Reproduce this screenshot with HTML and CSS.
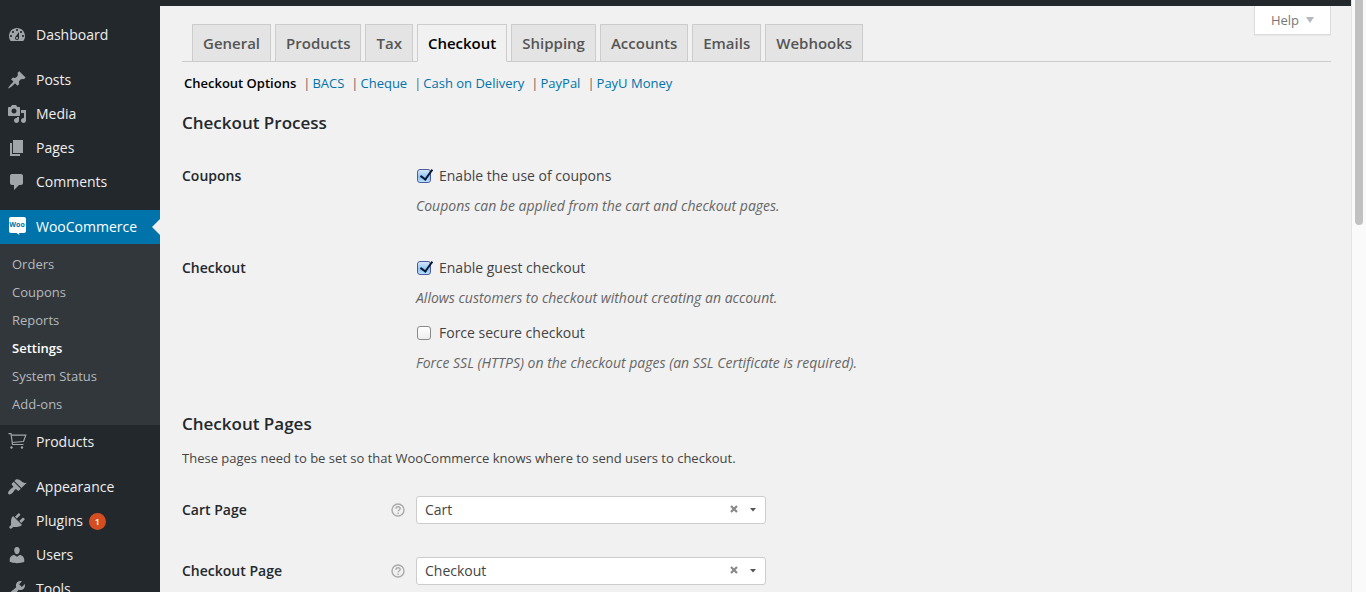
FILE: index.html
```html
<!DOCTYPE html>
<html lang="en">
<head>
<meta charset="utf-8">
<title>WooCommerce Settings</title>
<link rel="stylesheet" href="styles.css">
</head>
<body>
<div class="app">
  <nav class="sidebar" aria-label="Main menu">
    <ul class="menu">
      <li><a class="menu-link" href="#"><svg class="icon" viewBox="0 0 20 20"><path fill-rule="evenodd" d="M3.76 16h12.48c1.1-1.37 1.76-3.11 1.76-5 0-4.42-3.58-8-8-8s-8 3.58-8 8c0 1.89.66 3.63 1.76 5zM10 4c.55 0 1 .45 1 1s-.45 1-1 1-1-.45-1-1 .45-1 1-1zM6 6c.55 0 1 .45 1 1s-.45 1-1 1-1-.45-1-1 .45-1 1-1zm8 0c.55 0 1 .45 1 1s-.45 1-1 1-1-.45-1-1 .45-1 1-1zm-5.37 5.55L12 7v6c0 1.1-.9 2-2 2s-2-.9-2-2c0-.57.24-1.08.63-1.45zM4 10c.55 0 1 .45 1 1s-.45 1-1 1-1-.45-1-1 .45-1 1-1zm12 0c.55 0 1 .45 1 1s-.45 1-1 1-1-.45-1-1 .45-1 1-1zm-5 3c0-.55-.45-1-1-1s-1 .45-1 1 .45 1 1 1 1-.45 1-1z"/></svg>Dashboard</a></li>
      <li class="group-start"><a class="menu-link" href="#"><svg class="icon" viewBox="0 0 20 20"><path d="M10.44 3.02l1.82-1.82 6.36 6.35-1.83 1.82c-1.05-.68-2.48-.57-3.41.36l-.75.75c-.92.93-1.04 2.35-.35 3.41l-1.83 1.82-2.41-2.41-2.8 2.79c-.42.42-3.38 2.71-3.8 2.29s1.86-3.39 2.28-3.81l2.79-2.79L4.1 9.36l1.83-1.82c1.05.69 2.48.57 3.4-.36l.75-.75c.93-.92 1.05-2.35.36-3.41z"/></svg>Posts</a></li>
      <li><a class="menu-link" href="#"><svg class="icon" viewBox="0 0 20 20"><path fill-rule="evenodd" d="M13 11V4c0-.55-.45-1-1-1h-1.67L9 1H5L3.67 3H2c-.55 0-1 .45-1 1v7c0 .55.45 1 1 1h10c.55 0 1-.45 1-1zM7 4.5c1.38 0 2.5 1.12 2.5 2.5S8.38 9.5 7 9.5 4.5 8.38 4.5 7 5.62 4.5 7 4.5zM14 6h5v10.5c0 1.38-1.12 2.5-2.5 2.5S14 17.88 14 16.5s1.12-2.5 2.5-2.5c.17 0 .34.02.5.05V9h-3V6zm-4 8.05V13h2v3.5c0 1.38-1.12 2.5-2.5 2.5S7 17.88 7 16.5 8.12 14 9.5 14c.17 0 .34.02.5.05z"/></svg>Media</a></li>
      <li><a class="menu-link" href="#"><svg class="icon" viewBox="0 0 20 20"><path d="M6 15V2h10v13H6zm-1 1h8v2H3V5h2v11z"/></svg>Pages</a></li>
      <li><a class="menu-link" href="#"><svg class="icon" viewBox="0 0 20 20"><path d="M5 2h9c1.1 0 2 .9 2 2v7c0 1.1-.9 2-2 2h-2l-5 5v-5H5c-1.1 0-2-.9-2-2V4c0-1.1.9-2 2-2z"/></svg>Comments</a></li>
      <li class="group-start">
        <a class="menu-link current" href="#"><svg class="icon" viewBox="0 0 20 20"><path d="M4 0h13a2 2 0 0 1 2 2v12a2 2 0 0 1-2 2h-5l.5 2-3-2H4a2 2 0 0 1-2-2V2a2 2 0 0 1 2-2z"/><text class="woo-text" x="10" y="10" text-anchor="middle">Woo</text></svg>WooCommerce</a>
        <ul class="submenu">
          <li><a href="#">Orders</a></li>
          <li><a href="#">Coupons</a></li>
          <li><a href="#">Reports</a></li>
          <li><a class="active" href="#" aria-current="page">Settings</a></li>
          <li><a href="#">System Status</a></li>
          <li><a href="#">Add-ons</a></li>
        </ul>
      </li>
      <li><a class="menu-link" href="#"><svg class="icon" viewBox="0 0 20 20"><path class="line" d="M1.500 1.700h2.500l1.500 10.800h11M4.200 3.200h14.600l-2.300 6.300-11.300 1"/><circle cx="4.500" cy="15.500" r="1.200"/><circle cx="15" cy="15.500" r="1.200"/></svg>Products</a></li>
      <li class="group-start"><a class="menu-link" href="#"><svg class="icon" viewBox="0 0 20 20"><path d="M14.480 11.060L7.410 3.990l1.500-1.500c.5-.56 2.300-.47 3.510.32 1.210.8 1.430 1.280 2.910 2.100 1.180.64 2.450 1.260 4.450.85zm-.71.71L6.700 4.700 4.930 6.470c-.39.39-.39 1.020 0 1.410l1.060 1.060c.39.39.39 1.030 0 1.420-.6.6-1.430 1.110-2.210 1.690-.35.26-.7.53-1.010.84C1.430 14.230.4 16.080 1.400 17.070c.99 1 2.840-.03 4.180-1.360.31-.31.58-.66.85-1.020.57-.78 1.080-1.610 1.690-2.210.39-.39 1.020-.39 1.410 0l1.060 1.060c.39.39 1.020.39 1.410 0z"/></svg>Appearance</a></li>
      <li><a class="menu-link" href="#"><svg class="icon" viewBox="0 0 20 20"><path d="M13.110 4.360L9.870 7.600 8 5.730l3.240-3.240c.35-.34 1.050-.2 1.560.32.52.51.66 1.210.31 1.550zm-8 1.770l.91-1.120 9.010 9.010-1.190.84c-.71.71-2.630 1.160-3.820 1.160H6.140L4.900 17.260c-.59.59-1.540.59-2.120 0-.59-.58-.59-1.530 0-2.120l1.240-1.240v-3.880c0-1.130.4-3.190 1.090-3.890zm7.260 3.970l3.240-3.240c.34-.35 1.040-.21 1.550.31.52.51.66 1.210.31 1.550l-3.240 3.250z"/></svg>Plugins<span class="badge">1</span></a></li>
      <li><a class="menu-link" href="#"><svg class="icon" viewBox="0 0 20 20"><path d="M10 9.250c-2.270 0-2.730-3.440-2.730-3.440C7 4.020 7.820 2 9.970 2c2.160 0 2.980 2.020 2.710 3.810 0 0-.41 3.440-2.680 3.440zm0 2.570L12.720 10c2.390 0 4.520 2.330 4.520 4.530v2.490s-3.650 1.130-7.240 1.130c-3.650 0-7.240-1.130-7.240-1.130v-2.490c0-2.250 1.940-4.480 4.470-4.480z"/></svg>Users</a></li>
      <li><a class="menu-link" href="#"><svg class="icon" viewBox="0 0 20 20"><path fill-rule="evenodd" d="M16.680 9.770c-1.340 1.340-3.300 1.670-4.950.99l-5.410 6.520c-.99.99-2.590.99-3.580 0s-.99-2.590 0-3.570l6.520-5.420c-.68-1.650-.35-3.610.99-4.950 1.280-1.280 3.120-1.620 4.720-1.060l-2.890 2.890 2.820 2.820 2.860-2.870c.53 1.580.18 3.390-1.080 4.650zM3.810 16.210c.4.39 1.040.39 1.430 0 .4-.4.4-1.040 0-1.430-.39-.4-1.030-.4-1.430 0-.39.39-.39 1.030 0 1.430z"/></svg>Tools</a></li>
    </ul>
  </nav>

  <div class="page">
    <div class="topbar"></div>
    <button class="help" type="button">Help<svg class="help-arrow" viewBox="0 0 8 6"><path d="M0 0h8L4 6z"/></svg></button>
    <main class="content">
      <nav class="tabs" aria-label="Settings tabs">
        <a class="tab" href="#">General</a>
        <a class="tab" href="#">Products</a>
        <a class="tab" href="#">Tax</a>
        <a class="tab tab-active" href="#" aria-current="page">Checkout</a>
        <a class="tab" href="#">Shipping</a>
        <a class="tab" href="#">Accounts</a>
        <a class="tab" href="#">Emails</a>
        <a class="tab" href="#">Webhooks</a>
      </nav>
      <ul class="sections">
        <li><a class="section-active" href="#">Checkout Options</a></li>
        <li><a href="#">BACS</a></li>
        <li><a href="#">Cheque</a></li>
        <li><a href="#">Cash on Delivery</a></li>
        <li><a href="#">PayPal</a></li>
        <li><a href="#">PayU Money</a></li>
      </ul>

      <h2 class="heading">Checkout Process</h2>
      <div class="options">
        <div class="row">
          <div class="row-title">Coupons</div>
          <div class="fields">
            <div>
              <label class="check"><input type="checkbox" checked>Enable the use of coupons</label>
              <p class="description">Coupons can be applied from the cart and checkout pages.</p>
            </div>
          </div>
        </div>
        <div class="row">
          <div class="row-title">Checkout</div>
          <div class="fields">
            <div>
              <label class="check"><input type="checkbox" checked>Enable guest checkout</label>
              <p class="description">Allows customers to checkout without creating an account.</p>
            </div>
            <div>
              <label class="check"><input type="checkbox">Force secure checkout</label>
              <p class="description">Force SSL (HTTPS) on the checkout pages (an SSL Certificate is required).</p>
            </div>
          </div>
        </div>
      </div>

      <h2 class="heading heading-pages">Checkout Pages</h2>
      <p class="intro">These pages need to be set so that WooCommerce knows where to send users to checkout.</p>
      <div class="options">
        <div class="row row-select">
          <label class="row-title" for="cart-page">Cart Page</label>
          <svg class="tip" viewBox="0 0 14 14"><circle cx="7" cy="7" r="6"/><path d="M5 5.700C5 3.200 9.200 3.200 9.200 5.600c0 1.400-2.100 1.400-2.100 2.700M7.100 9.500v1.500"/></svg>
          <div class="picker">
            <select id="cart-page"><option>Cart</option></select>
            <button class="clear" type="button" aria-label="Clear cart page"><svg viewBox="0 0 8 8"><path d="M1 1l6 6M7 1L1 7"/></svg></button>
            <svg class="caret" viewBox="0 0 6 4"><path d="M0 0h6L3 3.500z"/></svg>
          </div>
        </div>
        <div class="row row-select">
          <label class="row-title" for="checkout-page">Checkout Page</label>
          <svg class="tip" viewBox="0 0 14 14"><circle cx="7" cy="7" r="6"/><path d="M5 5.700C5 3.200 9.200 3.200 9.200 5.600c0 1.400-2.100 1.400-2.100 2.700M7.100 9.500v1.500"/></svg>
          <div class="picker">
            <select id="checkout-page"><option>Checkout</option></select>
            <button class="clear" type="button" aria-label="Clear checkout page"><svg viewBox="0 0 8 8"><path d="M1 1l6 6M7 1L1 7"/></svg></button>
            <svg class="caret" viewBox="0 0 6 4"><path d="M0 0h6L3 3.500z"/></svg>
          </div>
        </div>
      </div>
    </main>
  </div>

  <div class="scroll-track"><div class="scroll-thumb"></div></div>
</div>
</body>
</html>
```

FILE: styles.css
```css
* {
  box-sizing: border-box;
}

body {
  margin: 0;
  background: #f1f1f1;
  color: #444;
  font: 14px/20px "Open Sans", "Noto Sans", sans-serif;
}

ul {
  margin: 0;
  padding: 0;
  list-style: none;
}

p {
  margin: 0;
}

a {
  color: #0073aa;
  text-decoration: none;
}

.app {
  display: flex;
  height: 100vh;
  overflow: hidden;
}

/* Sidebar */
.sidebar {
  flex: none;
  width: 160px;
  padding-top: 18px;
  background: #23282d;
}

.menu-link {
  position: relative;
  display: flex;
  align-items: center;
  gap: 9px;
  height: 34px;
  padding-left: 7px;
  color: #eee;
}

.group-start {
  margin-top: 11px;
}

.icon {
  flex: none;
  width: 20px;
  height: 20px;
  fill: #a0a5aa;
}

.icon .line {
  fill: none;
  stroke: #a0a5aa;
  stroke-width: 1.2;
}

.current {
  background: #0073aa;
  color: #fff;
}

.current .icon {
  fill: #fff;
}

.current::after {
  content: "";
  position: absolute;
  top: 9px;
  right: 0;
  border: 8px solid transparent;
  border-left-width: 0;
  border-right-color: #f1f1f1;
}

.icon .woo-text {
  fill: #0073aa;
  font-size: 7px;
  font-weight: 700;
}

.submenu {
  padding: 6px 0 7px;
  background: #32373c;
  font-size: 13px;
}

.submenu a {
  display: block;
  padding: 0 12px;
  color: #b4b9be;
  line-height: 28px;
}

.submenu .active {
  color: #fff;
  font-weight: 600;
}

.badge {
  width: 17px;
  height: 17px;
  margin-left: -3px;
  border-radius: 50%;
  background: #d54e21;
  color: #fff;
  font-size: 9px;
  font-weight: 600;
  line-height: 17px;
  text-align: center;
}

/* Page */
.page {
  position: relative;
  flex: 1;
  min-width: 0;
}

.topbar {
  height: 6px;
  background: #23282d;
}

.help {
  position: absolute;
  top: 6px;
  right: 20px;
  display: flex;
  align-items: center;
  gap: 7px;
  height: 29px;
  padding: 0 16px;
  border: 1px solid #ddd;
  border-top: 0;
  background: #fff;
  box-shadow: 0 1px 1px rgba(0, 0, 0, 0.04);
  color: #777;
  font: inherit;
  font-size: 13px;
}

.help-arrow {
  width: 8px;
  height: 6px;
  fill: #b4b9be;
}

.content {
  padding: 18px 20px 0 22px;
}

.tabs {
  display: flex;
  gap: 4px;
  padding-left: 10px;
  border-bottom: 1px solid #ccc;
}

.tab {
  margin-bottom: -1px;
  padding: 6px 10px;
  border: 1px solid #ccc;
  background: #e4e4e4;
  color: #555;
  font-size: 15px;
  font-weight: 600;
  line-height: 24px;
}

.tab-active {
  border-bottom-color: #f1f1f1;
  background: #f1f1f1;
  color: #000;
}

.sections {
  display: flex;
  gap: 7px;
  margin: 12px 2px 0;
  font-size: 13px;
  line-height: 18px;
}

.sections li + li::before {
  content: "|";
  margin-right: 2px;
  color: #666;
}

.section-active {
  color: #000;
  font-weight: 600;
}

.heading {
  margin: 19px 0 16px;
  color: #23282d;
  font-size: 17px;
  font-weight: 600;
  line-height: 24px;
}

.heading-pages {
  margin: 12px 0 13px;
}

.intro {
  margin-bottom: 14px;
  font-size: 13px;
  line-height: 18px;
}

.row {
  display: grid;
  grid-template-columns: 234px 1fr;
  padding: 15px 0 27px;
}

.row-title {
  color: #23282d;
  font-weight: 600;
}

.fields {
  display: grid;
  gap: 15px;
}

.check {
  display: flex;
  align-items: center;
  gap: 8px;
  width: max-content;
  margin-bottom: 10px;
}

.check input {
  appearance: none;
  width: 14px;
  height: 14px;
  margin: 0 0 0 1px;
  border: 1px solid #8a8a8a;
  border-radius: 3px;
  background: linear-gradient(#fff, #eee);
}

.check input:checked {
  position: relative;
  border-color: #4a5c9e;
  background: linear-gradient(#d5e8fa, #8fc3f5 60%, #b9e0fd);
}

.check input:checked::after {
  content: "";
  position: absolute;
  top: -3px;
  left: 5px;
  width: 5px;
  height: 11px;
  border: solid #0b1a33;
  border-width: 0 2px 2px 0;
  transform: rotate(36deg);
}

.description {
  color: #666;
  font-style: italic;
}

.row-select {
  grid-template-columns: 209px 25px minmax(0, 350px);
  align-items: center;
  padding: 15px 0 18px;
}

.tip {
  width: 14px;
  height: 14px;
  fill: none;
  stroke: #aaa;
  stroke-width: 1.4;
}

.picker {
  position: relative;
}

.picker select {
  display: block;
  appearance: none;
  width: 100%;
  height: 28px;
  padding: 0 48px 0 8px;
  border: 1px solid #ccc;
  border-radius: 3px;
  background: #fff;
  color: #444;
  font: inherit;
}

.clear {
  position: absolute;
  top: 9px;
  right: 28px;
  width: 8px;
  height: 8px;
  padding: 0;
  border: 0;
  background: none;
}

.clear svg {
  display: block;
  fill: none;
  stroke: #888;
  stroke-width: 2.2;
}

.caret {
  position: absolute;
  top: 12px;
  right: 10px;
  width: 6px;
  height: 4px;
  fill: #555;
}

/* Scroll bar */
.scroll-track {
  flex: none;
  width: 15px;
  padding: 0 3px;
  border-left: 1px solid #e4e4e4;
  background: #fafafa;
}

.scroll-thumb {
  width: 8px;
  height: 38vh;
  border-radius: 0 0 4px 4px;
  background: #c1c1c1;
}
```
